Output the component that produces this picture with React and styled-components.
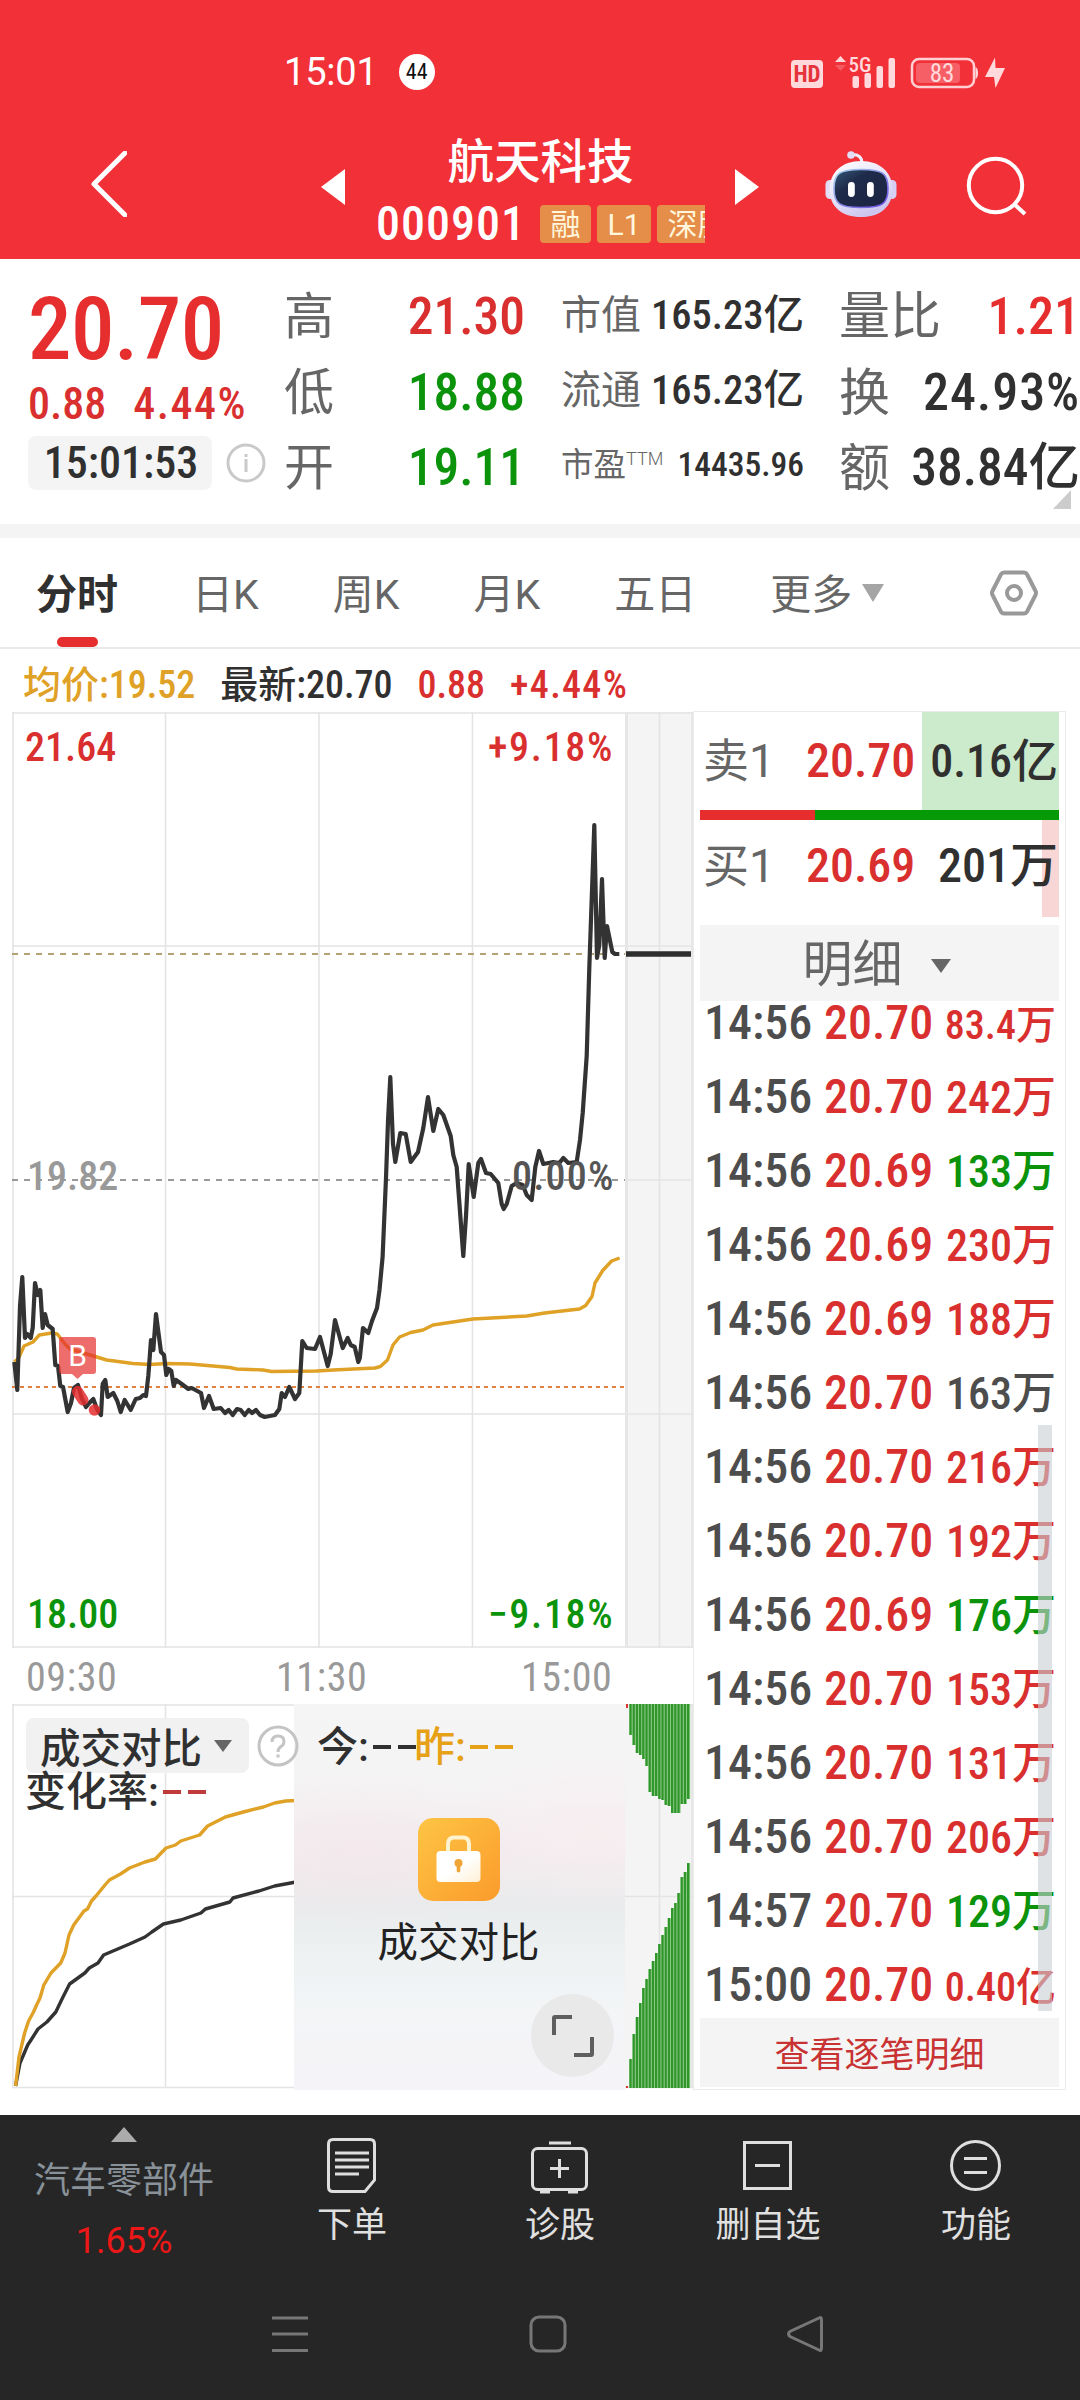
import React from "react";
import styled, { createGlobalStyle } from "styled-components";

const RED = "#d9302f";
const GREEN = "#0b930b";
const DARK = "#303030";
const GREY = "#666666";
const GOLD = "#dfa126";

const GlobalStyle = createGlobalStyle`
  * {
    box-sizing: border-box;
  }
  body {
    margin: 0;
    background: #ffffff;
    font-family: "Roboto Condensed", "Noto Sans CJK SC", sans-serif;
  }
  svg {
    display: block;
    flex: none;
  }
`;

const Page = styled.div`
  width: 1080px;
  height: 2400px;
  overflow: hidden;
  display: flex;
  flex-direction: column;
`;

/* ---------- header ---------- */

const TopArea = styled.header`
  height: 259px;
  background: #f23038;
  color: #ffffff;
`;

const StatusBar = styled.div`
  height: 120px;
  padding: 24px 74px 0 284px;
  display: flex;
  align-items: center;
`;

const Clock = styled.span`
  font-family: Roboto, sans-serif;
  font-size: 38px;
  letter-spacing: -0.2px;
`;

const CountBadge = styled.span`
  width: 36px;
  height: 36px;
  margin-left: 21px;
  border-radius: 50%;
  background: #ffffff;
  color: #111111;
  font-size: 22px;
  line-height: 36px;
  text-align: center;
`;

const StatusIcons = styled.div`
  margin-left: auto;
`;

const TitleBar = styled.div`
  height: 139px;
  display: grid;
  grid-template-columns: 321px 55px 329px 53px 67px 72px 68px 1fr;
`;

const TitleCell = styled.div`
  padding-top: ${({ $top }) => $top}px;
  padding-left: ${({ $left }) => $left || 0}px;
`;

const StockTitle = styled.div`
  padding-top: 12px;
  overflow: hidden;
`;

const StockName = styled.h1`
  margin: 0;
  font-size: 46.5px;
  line-height: 60px;
  font-weight: 500;
  text-align: center;
`;

const StockMeta = styled.div`
  margin-top: 12px;
  display: flex;
  align-items: center;
  gap: 6px;
`;

const StockCode = styled.span`
  width: 158px;
  flex: none;
  font-size: 48px;
  letter-spacing: 1px;
  line-height: 40px;
  font-weight: 500;
`;

const Tag = styled.span`
  height: 38px;
  min-width: 51px;
  flex: none;
  padding: 0 10.5px;
  border-radius: 4px;
  background: #e58e49;
  color: #fff6dc;
  font-family: Roboto, "Noto Sans CJK SC", sans-serif;
  font-size: 30px;
  line-height: 39px;
  text-align: center;
  white-space: nowrap;
`;

/* ---------- quote ---------- */

const Quote = styled.section`
  position: relative;
  height: 265px;
  padding: 19px 2px 0 28px;
  display: grid;
  grid-template-columns: 258px 239px 240px 237px;
`;

const PriceColumn = styled.div`
  padding-top: 6px;
  color: #e62e2e;
  font-weight: 500;
`;

const LastPrice = styled.div`
  font-size: 87px;
  line-height: 90px;
  letter-spacing: -0.5px;
`;

const ChangeRow = styled.div`
  display: flex;
  gap: 27px;
  font-size: 44px;
  line-height: 60px;
  color: ${RED};

  span + span {
    letter-spacing: 1.5px;
  }
`;

const TimeRow = styled.div`
  margin-top: 2px;
  display: flex;
  align-items: center;
  gap: 14px;
`;

const TimeChip = styled.span`
  width: 184px;
  height: 54px;
  padding-left: 2px;
  border-radius: 8px;
  background: #f4f4f4;
  color: ${DARK};
  font-size: 44px;
  line-height: 54px;
  text-align: center;
`;

const StatColumn = styled.div`
  margin-left: ${({ $ml }) => $ml || 0}px;
  margin-right: ${({ $mr }) => $mr || 0}px;
  display: grid;
  grid-template-rows: ${({ $rows }) => $rows};
`;

const Stat = styled.div`
  display: flex;
  justify-content: space-between;
  align-items: center;
  white-space: nowrap;
`;

const StatLabel = styled.span`
  color: ${GREY};
  font-size: ${({ $size }) => $size}px;
  line-height: 1;

  sup {
    font-family: Roboto, sans-serif;
    font-size: 18px;
    font-weight: 300;
    line-height: 0;
    vertical-align: 11px;
  }
`;

const StatValue = styled.span`
  color: ${({ $color }) => $color || DARK};
  font-size: ${({ $size }) => $size}px;
  letter-spacing: ${({ $ls }) => $ls || 0}px;
  line-height: 1;
  font-weight: 500;
`;

const Corner = styled.i`
  position: absolute;
  right: 9px;
  bottom: 15px;
  border-left: 18px solid transparent;
  border-bottom: 19px solid #cccccc;
`;

const Divider = styled.div`
  height: 14px;
  background: #f4f4f4;
`;

/* ---------- tabs ---------- */

const Tabs = styled.nav`
  height: 111px;
  padding: 0 42px 0 36px;
  border-bottom: 2px solid #e9e9e9;
  display: flex;
  align-items: center;
  gap: 74px;
  font-family: Roboto, "Noto Sans CJK SC", sans-serif;
`;

const Tab = styled.span`
  position: relative;
  height: 109px;
  color: ${({ $active }) => ($active ? DARK : GREY)};
  font-size: 41px;
  font-weight: ${({ $active }) => ($active ? 600 : 400)};
  line-height: 114px;

  &::after {
    content: "";
    display: ${({ $active }) => ($active ? "block" : "none")};
    position: absolute;
    left: 21px;
    bottom: 0;
    width: 41px;
    height: 10px;
    border-radius: 5px;
    background: #e62e2e;
  }
`;

const MoreTab = styled.span`
  display: flex;
  align-items: center;
  gap: 10px;
`;

const Down = styled.i`
  border-left: ${({ $w }) => $w / 2}px solid transparent;
  border-right: ${({ $w }) => $w / 2}px solid transparent;
  border-top: ${({ $h }) => $h}px solid ${({ $color }) => $color};
`;

const SettingsSlot = styled.span`
  margin-left: auto;
`;

const Legend = styled.div`
  height: 62px;
  padding: 4px 0 0 23px;
  display: flex;
  gap: 25px;
  font-size: 38px;
  line-height: 64px;
  font-weight: 500;
`;

const LegendItem = styled.span`
  color: ${({ $color }) => $color};
  letter-spacing: ${({ $ls }) => $ls || 0}px;
`;

/* ---------- body ---------- */

const Body = styled.main`
  height: 1404px;
  display: flex;
`;

const ChartColumn = styled.div`
  width: 693px;
`;

const SubChart = styled.div`
  position: relative;
  height: 386px;
`;

const Layer = styled.div`
  position: absolute;
  left: ${({ $x }) => $x}px;
  top: ${({ $y }) => $y}px;
  white-space: nowrap;
`;

const IndicatorChip = styled(Layer)`
  width: 223px;
  height: 55px;
  padding-left: 14px;
  border-radius: 8px;
  background: rgba(240, 240, 240, 0.9);
  display: flex;
  align-items: center;
  gap: 12px;
  color: ${DARK};
  font-size: 40.5px;
  font-weight: 500;
`;

const RateText = styled(Layer)`
  display: flex;
  align-items: center;
  color: ${({ $color }) => $color || DARK};
  font-size: 41px;
  line-height: 50px;
  font-weight: 500;
`;

const Dashes = styled.span`
  margin-left: 5px;
  display: inline-flex;
  gap: 7px;

  &::before,
  &::after {
    content: "";
    width: 18px;
    height: 4px;
    background: ${({ $color }) => $color};
  }
`;

const LockedPanel = styled(Layer)`
  width: 331px;
  height: 386px;
  padding: 114px 2px 0 0;
  background:
    radial-gradient(180px 80px at 20% 38%, rgba(246, 228, 233, 0.55), transparent),
    radial-gradient(160px 80px at 90% 34%, rgba(249, 236, 239, 0.7), transparent),
    linear-gradient(#f5f5f6 0%, #f4f3f4 25%, #f0edef 40%, #e9ebec 52%, #edf1f2 64%, #f3f5f7 80%, #f5f3f7 100%);
  display: flex;
  flex-direction: column;
  align-items: center;
`;

const LockedTitle = styled.div`
  margin-top: 16px;
  color: #222222;
  font-size: 40.5px;
  line-height: 52px;
`;

const ExpandButton = styled(Layer)`
  width: 83px;
  height: 83px;
  border-radius: 50%;
  background: #e9e9e9;
  display: grid;
  place-items: center;
`;

/* ---------- order book ---------- */

const OrderPanel = styled.aside`
  position: relative;
  width: 373px;
  height: 1379px;
  padding: 0 6px;
  border: 1px solid #ebebeb;
  background: #ffffff;
  font-weight: 500;
`;

const LevelRow = styled.div`
  height: ${({ $h }) => $h}px;
  padding: 0 1px 0 3px;
  display: grid;
  grid-template-columns: 103px 116px 1fr;
  font-size: 48px;
  line-height: ${({ $lh }) => $lh}px;
  color: ${RED};
  background: linear-gradient(${({ $fill }) => $fill}, ${({ $fill }) => $fill}) right top / ${({ $w }) => $w}px 100% no-repeat;

  span:first-child {
    color: ${GREY};
    font-family: Roboto, "Noto Sans CJK SC", sans-serif;
    font-size: 46px;
    font-weight: 400;
  }
  span:last-child {
    color: ${DARK};
    font-size: ${({ $size }) => $size}px;
    text-align: right;
    white-space: nowrap;
  }
`;

const RatioBar = styled.div`
  height: 10px;
  background: linear-gradient(90deg, #e62e2e 115px, #069a06 115px);
`;

const DetailHeader = styled.div`
  height: 76px;
  margin-top: 8px;
  padding: 5px 6px 0 0;
  background: #f4f4f4;
  display: flex;
  justify-content: center;
  align-items: center;
  gap: 28px;
  color: ${GREY};
  font-size: 50px;
  font-weight: 400;
  line-height: 71px;
`;

const TradeList = styled.div`
  display: flow-root;
  height: 1017px;
`;

const Trade = styled.div`
  height: 74px;
  margin-top: ${({ $first }) => ($first ? -15 : 0)}px;
  padding: 0 3px 0 4px;
  display: grid;
  grid-template-columns: 120px 106px 1fr;
  font-size: 48px;
  line-height: 74px;
  color: ${RED};

  span:first-child {
    color: #4d4d4d;
  }
`;

const Volume = styled.span`
  color: ${({ $color }) => $color};
  font-size: ${({ $small }) => ($small ? 40 : 44)}px;
  line-height: ${({ $small }) => ($small ? 79 : 77)}px;
  text-align: right;
  white-space: nowrap;
`;

const ScrollThumb = styled.i`
  position: absolute;
  right: 13px;
  top: 713px;
  width: 14px;
  height: 586px;
  background: rgba(200, 206, 212, 0.6);
`;

const AllTrades = styled.div`
  height: 69px;
  background: #f4f4f4;
  color: #c83232;
  font-size: 35px;
  font-weight: 400;
  line-height: 75px;
  text-align: center;
`;

/* ---------- bottom ---------- */

const ActionBar = styled.footer`
  height: 155px;
  background: #262626;
  display: grid;
  grid-template-columns: 248px repeat(4, 208px);
`;

const Sector = styled.div`
  padding-top: 12px;
  display: flex;
  flex-direction: column;
  align-items: center;
  color: #899299;
  font-size: 36px;
  line-height: 59px;
  white-space: nowrap;

  b {
    color: #ee1717;
    font-family: Roboto, sans-serif;
    font-weight: 400;
    line-height: 60px;
  }
`;

const Up = styled.i`
  margin-bottom: 10px;
  border-left: 13px solid transparent;
  border-right: 13px solid transparent;
  border-bottom: 15px solid #ababab;
`;

const Action = styled.div`
  padding-top: 20px;
  display: flex;
  flex-direction: column;
  align-items: center;
  gap: 6px;
  color: #e0e0e0;
  font-size: 35px;
  line-height: 50px;
`;

const SystemNav = styled.div`
  height: 130px;
  padding: 45px 256px 0 271px;
  background: #262626;
  display: flex;
  justify-content: space-between;
`;

/* ---------- data ---------- */

const PRICE_LINE =
  "14.3,1362 17.3,1390 20,1306 22.3,1277 25,1338 27.3,1334 30.7,1338 32.7,1328 35,1283 37.7,1295 40.3,1290 42.7,1328 45,1314 47.7,1325 52.7,1329 55.3,1365 58,1366 60.3,1386 63,1387 67.7,1412 71,1403 74,1388 78,1385 81.7,1398 86,1407 89.3,1403 93.3,1399 97.3,1410 101,1415 102.7,1384 105.3,1380 107.7,1397 113.3,1393 117.3,1401 120.7,1412 124.7,1400 130.7,1410 135.7,1399 140,1398 143.3,1395 146,1396 148.3,1376 151,1340 153.3,1350 156,1314 161,1352 164,1355 166.3,1375 168.7,1369 171.3,1371 173.7,1386 176,1380 181.7,1384 188.3,1389 191.7,1388 201,1393 204,1408 209,1396 213.7,1409 220.7,1408 225,1413 228.7,1410 232.7,1415 237,1409 240.7,1410 244.7,1415 248.7,1410 252,1413 256,1410 260,1415 264.7,1417 275,1415 279.3,1409 281.7,1393 285,1397 289.3,1387 295,1399 299.3,1393 302.3,1341 306.7,1348 315,1349 320,1337 327.7,1366 330.7,1354 335,1320 342.7,1348 347.7,1338 350.7,1345 354.7,1347 358.3,1362 359.8,1358 363,1328 368.3,1333 372,1321 377,1308 379.5,1290 382.6,1257 386,1178 388,1121 390.3,1077 393,1144 395.3,1162 400.3,1133 405.7,1134 410.7,1162 418,1152 423.3,1128 428,1097 433.3,1131 438.3,1109 443.3,1115 450.7,1136 453.3,1155 456.7,1167 463.3,1256 466,1216 468.7,1164 473.7,1197 478.3,1163 481,1159 486,1173 490.7,1174 498.3,1183 501.7,1204 503.7,1209 506.7,1204 511.7,1186 516.7,1183 522.7,1185 526.7,1195 531.7,1200 535.3,1167 539,1151 543.3,1164 553.3,1162 559.3,1163 563.3,1158 568.3,1163 576.7,1162 580,1140 582.7,1113 586.7,1056 589.3,968 594.3,825 597,958 599.3,945 602,879 604.7,958 607,926 612.3,952 615,954 619.3,954";

const AVERAGE_LINE =
  "14.3,1362 18.7,1358 24,1346 33,1342 39.3,1335 51.7,1333 57.3,1334 65,1344 70,1349 96.7,1357 106.7,1360 133,1363.5 150,1364.5 166.7,1363.5 190,1364 213,1366 230,1367.5 236.7,1369 263,1370 271.7,1371.5 316.7,1371 333,1370 375,1368 380.4,1366.5 387.5,1360 393,1345 399.6,1337 410.7,1332.5 423,1330 433,1325 473,1319 526.8,1316 544.6,1313 579.5,1309 585.7,1305.5 592,1296.5 595,1283 602.7,1270.5 611.6,1261 619.6,1258";

const YESTERDAY_LINE =
  "15.6,2086 19,2057 24.6,2033 28.6,2021 33.5,2012 36.6,2005 40,1998 43.8,1985 51,1973 60.7,1963 65,1953 69,1935 73.7,1925 84,1911 87.5,1909 91.5,1901 96,1896 105,1885 109.4,1880 120.5,1874 129.5,1868 145,1862 155.4,1859 166,1848 175.4,1845 180.8,1841 199.6,1835 207.6,1826 225.4,1817 243.3,1812 263.4,1807 274.6,1803 285.7,1801 296,1800.5";

const TODAY_LINE =
  "15.6,2086 20,2063 27.7,2045 31,2040 38,2029 46.9,2022 55.8,2012 62.5,1998 69.6,1984 84.8,1973 89.3,1968 98,1963 103.6,1955 129.5,1944 145,1937 151.8,1932 163.4,1924 180.8,1920 200.9,1913 205.4,1909 229.9,1902 233,1898 259,1891 274.6,1886 296,1882";

const UPPER_BARS = [1735, 1745, 1753, 1755, 1759, 1766, 1792, 1796, 1796, 1799, 1800, 1805, 1806, 1813, 1813, 1813, 1804, 1804, 1799];
const LOWER_BARS = [2059, 2034, 2017, 2003, 1988, 1979, 1969, 1961, 1953, 1944, 1935, 1927, 1918, 1908, 1903, 1893, 1877, 1872, 1863];

const TRADES = [
  ["14:56", "20.70", "83.4万", RED],
  ["14:56", "20.70", "242万", RED],
  ["14:56", "20.69", "133万", GREEN],
  ["14:56", "20.69", "230万", RED],
  ["14:56", "20.69", "188万", RED],
  ["14:56", "20.70", "163万", "#4d4d4d"],
  ["14:56", "20.70", "216万", RED],
  ["14:56", "20.70", "192万", RED],
  ["14:56", "20.69", "176万", GREEN],
  ["14:56", "20.70", "153万", RED],
  ["14:56", "20.70", "131万", RED],
  ["14:56", "20.70", "206万", RED],
  ["14:57", "20.70", "129万", GREEN],
  ["15:00", "20.70", "0.40亿", RED],
];

/* ---------- icons ---------- */

const DeviceStatus = () => (
  <svg width="216" height="38" viewBox="790 52 216 38" fill="#ffd9db">
    <rect x="791" y="59" width="32" height="28" rx="4" />
    <text x="807" y="81" fontSize="23" fontWeight="700" textAnchor="middle" fill="#e6343c">
      HD
    </text>
    <path d="M835 61 l5.5 -6 l5.5 6z" />
    <path d="M835 64 l5.5 6 l5.5 -6z" opacity="0.25" />
    <text x="848.5" y="70.5" fontSize="21" fontWeight="500">
      5G
    </text>
    <rect x="852.5" y="75" width="6.5" height="12" rx="2" />
    <rect x="864.5" y="72" width="6.5" height="15" rx="2" />
    <rect x="876.5" y="65" width="6.5" height="22" rx="2" />
    <rect x="888.5" y="57" width="6.5" height="30" rx="2" />
    <rect x="912" y="58" width="62" height="28" rx="7" fill="none" stroke="#ffd0d3" strokeWidth="2.5" />
    <rect x="916" y="62" width="44" height="20" rx="4" fill="#f75f66" />
    <path d="M975.5 66 q2.5 1 2.5 6 q0 5 -2.5 6z" />
    <text x="942" y="81" fontSize="25" textAnchor="middle">
      83
    </text>
    <path d="M995 56.5 L985 76 H994 L995.5 87 L1005 67 H995.5z" />
  </svg>
);

const BackIcon = () => (
  <svg width="36" height="66" viewBox="91 151 36 66" fill="none" stroke="#fff" strokeWidth="5">
    <path d="M125 153 L94 184 L125 215" strokeLinecap="round" strokeLinejoin="round" />
  </svg>
);

const Triangle = ({ right }) => (
  <svg width="24" height="36" viewBox="0 0 24 36" fill="#fff">
    <path d={right ? "M0 0 L24 18 L0 36z" : "M24 0 L0 18 L24 36z"} />
  </svg>
);

const RobotIcon = () => (
  <svg width="72" height="68" viewBox="825 150 72 68">
    <defs>
      <linearGradient id="robotHead" x1="0" y1="0" x2="0.5" y2="1">
        <stop offset="0" stopColor="#ffffff" />
        <stop offset="0.65" stopColor="#e3dff8" />
        <stop offset="1" stopColor="#cdc6ee" />
      </linearGradient>
      <linearGradient id="robotFace" x1="0" y1="0" x2="1" y2="1">
        <stop offset="0" stopColor="#35587a" />
        <stop offset="0.35" stopColor="#1f2b4a" />
        <stop offset="1" stopColor="#1b2442" />
      </linearGradient>
      <linearGradient id="robotRim" x1="0" y1="0" x2="1" y2="1">
        <stop offset="0" stopColor="#a9d7e8" />
        <stop offset="1" stopColor="#6a48e6" />
      </linearGradient>
    </defs>
    <path d="M862 163 q0 -8 -9 -8.5" fill="none" stroke="#f0eefc" strokeWidth="3" />
    <circle cx="851" cy="155" r="3.8" fill="#e2dcf6" />
    <rect x="825.5" y="180" width="9" height="19" rx="4.5" fill="#e3def7" />
    <rect x="887.5" y="180" width="9" height="19" rx="4.5" fill="#d6cff3" />
    <path d="M861 161 C880 161 892 172 892.5 189 C892.5 207 880 217 861 217 C842 217 829.5 207 829.5 189 C830 172 842 161 861 161z" fill="url(#robotHead)" />
    <path d="M861 169.5 C882 169.5 888 173 888 188.5 C888 204 882 207.5 861 207.5 C840 207.5 834 204 834 188.5 C834 173 840 169.5 861 169.5z" fill="url(#robotFace)" stroke="url(#robotRim)" strokeWidth="1.6" />
    <rect x="848" y="182" width="6.8" height="15" rx="3.4" fill="#fff" />
    <rect x="867" y="182" width="6.8" height="15" rx="3.4" fill="#fff" />
  </svg>
);

const SearchIcon = () => (
  <svg width="64" height="64" viewBox="964 155 64 64" fill="none" stroke="#fff" strokeWidth="4">
    <circle cx="994.5" cy="185.5" r="26.7" />
    <path d="M1013 204 L1024 214" />
  </svg>
);

const InfoIcon = () => (
  <svg width="40" height="40" viewBox="0 0 40 40" fill="none" stroke="#c9c9c9" strokeWidth="3">
    <circle cx="20" cy="20" r="18" />
    <path d="M20 16 V29 M20 11 V14" />
  </svg>
);

const HexIcon = () => (
  <svg width="48" height="46" viewBox="0 0 48 46" fill="none" stroke="#999" strokeWidth="4">
    <path d="M14 2.5 H34 Q36 2.5 37 4.3 L45.5 21 Q46.5 23 45.5 25 L37 41.7 Q36 43.5 34 43.5 H14 Q12 43.5 11 41.7 L2.5 25 Q1.5 23 2.5 21 L11 4.3 Q12 2.5 14 2.5z" />
    <circle cx="24" cy="23" r="7" />
  </svg>
);

const HelpIcon = () => (
  <svg width="42" height="42" viewBox="0 0 42 42" fill="none" stroke="#c4c4c4" strokeWidth="3">
    <circle cx="21" cy="21" r="19" />
    <path d="M15 17 Q15 11 21 11 Q27 11 27 16.5 Q27 19.5 24 21.5 Q21 23.5 21 27 M21 29.5 V32.5" />
  </svg>
);

const LockIcon = () => (
  <svg width="82" height="83" viewBox="0 0 82 83">
    <defs>
      <linearGradient id="lockBg" x1="0" y1="0" x2="1" y2="1">
        <stop offset="0" stopColor="#fdc544" />
        <stop offset="1" stopColor="#fb9b2c" />
      </linearGradient>
      <linearGradient id="lockBody" x1="0" y1="0" x2="1" y2="1">
        <stop offset="0.5" stopColor="#ffffff" />
        <stop offset="1" stopColor="#fff0d4" />
      </linearGradient>
    </defs>
    <rect width="82" height="83" rx="15" fill="url(#lockBg)" />
    <path d="M30 36 V26 Q30 19.5 36 19.5 H45 Q51 19.5 51 26 V36" fill="none" stroke="#fff3cf" strokeWidth="4" />
    <rect x="18.5" y="33" width="44" height="31" rx="4" fill="url(#lockBody)" />
    <circle cx="40.5" cy="45" r="4" fill="#f0a637" />
    <rect x="38.7" y="46" width="3.6" height="8.5" rx="1.8" fill="#f0a637" />
  </svg>
);

const ExpandIcon = () => (
  <svg width="44" height="44" viewBox="0 0 44 44" fill="none" stroke="#5e5e5e" strokeWidth="4">
    <path d="M3 21 V4 Q3 3 4 3 H21 M23 41 H40 Q41 41 41 40 V23" />
  </svg>
);

const actionStroke = { fill: "none", stroke: "#dedede", strokeWidth: 3 };

const OrderIcon = () => (
  <svg width="60" height="60" viewBox="0 0 60 60" {...actionStroke}>
    <path d="M11 4.5 H48 Q52.5 4.5 52.5 9 V45 L43 56.5 H11 Q6.5 56.5 6.5 52 V9 Q6.5 4.5 11 4.5z" />
    <path d="M13 18 H47 M13 25 H47 M13 32 H47 M13 39 H37" />
  </svg>
);

const DiagnoseIcon = () => (
  <svg width="60" height="60" viewBox="0 0 60 60" {...actionStroke}>
    <rect x="2.5" y="13.5" width="54" height="41" rx="5" />
    <path d="M19 8 H41 M29.5 24 V43 M20 33.5 H39" />
    <path d="M10 57 H20 M38 57 H48" />
  </svg>
);

const RemoveIcon = () => (
  <svg width="60" height="60" viewBox="0 0 60 60" {...actionStroke}>
    <rect x="6.5" y="7.5" width="46" height="46" />
    <path d="M17 30.5 H42" />
  </svg>
);

const FunctionIcon = () => (
  <svg width="60" height="60" viewBox="0 0 60 60" {...actionStroke}>
    <circle cx="29.5" cy="30.5" r="24" />
    <path d="M18 23.5 H41 M18 37.5 H41" />
  </svg>
);

/* ---------- charts ---------- */

const grid = { stroke: "#e4e4e4", strokeWidth: 1.6 };

const PriceChart = () => (
  <svg width="693" height="993" viewBox="0 711 693 993" fill="none">
    <rect x="625" y="712" width="68" height="936" fill="#f4f4f4" />
    <path d="M12 713 H693 M12 946 H693 M625 1180 H693 M12 1414 H693 M12 1647 H693" {...grid} />
    <path d="M13 712 V1648 M165.5 712 V1648 M319 712 V1648 M472.5 712 V1648 M659.5 712 V1648 M692 712 V1648" {...grid} />
    <path d="M626.5 712 V1648" stroke="#e6e6e6" strokeWidth="3" />
    <path d="M12 954 H625" stroke="#b3a273" strokeWidth="2" strokeDasharray="6 6" />
    <path d="M12 1180 H625" stroke="#999" strokeWidth="2" strokeDasharray="6 6" />
    <path d="M12 1387 H625" stroke="#e07f3e" strokeWidth="2" strokeDasharray="4 4" />
    <polyline points={AVERAGE_LINE} stroke={GOLD} strokeWidth="3.4" strokeLinejoin="round" />
    <polyline points={PRICE_LINE} stroke="#333" strokeWidth="4.2" strokeLinejoin="round" />
    <path d="M626 954 H691" stroke="#2e2e2e" strokeWidth="5.5" />
    <g fill="#e62e2e">
      <path d="M77.5 1391.5 L83 1400" stroke="#e62e2e" strokeWidth="11" strokeLinecap="round" opacity="0.85" />
      <circle cx="94.5" cy="1410" r="5.8" opacity="0.85" />
      <path d="M62 1337 H93 Q96 1337 96 1340 V1371 Q96 1374 93 1374 H83 L77.5 1379 L72 1374 H62 Q59 1374 59 1371 V1340 Q59 1337 62 1337z" opacity="0.7" />
    </g>
    <text x="77.5" y="1366" fontSize="30" textAnchor="middle" fill="#fff" fontFamily="Roboto">
      B
    </text>
    <g fontSize="40" fontWeight="500">
      <text x="25" y="761" fill={RED}>21.64</text>
      <text x="488" y="761" fill={RED} letterSpacing="1.7">+9.18%</text>
      <text x="27" y="1190" fill="#999">19.82</text>
      <text x="512" y="1190" fill="#555" letterSpacing="1.2">0.00%</text>
      <text x="27" y="1628" fill={GREEN}>18.00</text>
      <text x="488" y="1628" fill={GREEN} letterSpacing="1.7">−9.18%</text>
    </g>
    <g fontSize="40" fill="#999" letterSpacing="0.6">
      <text x="26" y="1691">09:30</text>
      <text x="276" y="1691">11:30</text>
      <text x="521" y="1691">15:00</text>
    </g>
  </svg>
);

const CompareChart = () => (
  <svg width="693" height="386" viewBox="0 1704 693 386" fill="none">
    <rect x="625" y="1704" width="68" height="384" fill="#f4f4f4" />
    <path d="M12 1705 H693 M12 1896.5 H693 M12 2087.5 H693 M13 1704 V2088 M165.5 1704 V2088 M659.5 1704 V2088 M692 1704 V2088" {...grid} />
    <polyline points={TODAY_LINE} stroke="#333" strokeWidth="3.4" strokeLinejoin="round" />
    <polyline points={YESTERDAY_LINE} stroke={GOLD} strokeWidth="3.4" strokeLinejoin="round" />
    {UPPER_BARS.map((y, i) => (
      <g key={i}>
        <rect x={629.4 + i * 3.2} y="1704" width="3.2" height={y - 1704} fill="#8ac683" />
        <rect x={629.4 + i * 3.2} y="1704" width="2.2" height={y - 1704} fill="#2f962a" />
        <rect x={629.4 + i * 3.2} y={LOWER_BARS[i]} width="3.2" height={2088 - LOWER_BARS[i]} fill="#8ac683" />
        <rect x={629.4 + i * 3.2} y={LOWER_BARS[i]} width="2.2" height={2088 - LOWER_BARS[i]} fill="#2f962a" />
      </g>
    ))}
    <path d="M627 1704 V1708 M627 2086 V2088" stroke="#d33" strokeWidth="2" />
  </svg>
);

const App = () => {
  return (
    <Page>
      <GlobalStyle />
      <TopArea>
        <StatusBar>
          <Clock>15:01</Clock>
          <CountBadge>44</CountBadge>
          <StatusIcons>
            <DeviceStatus />
          </StatusIcons>
        </StatusBar>
        <TitleBar>
          <TitleCell $top={31} $left={91}>
            <BackIcon />
          </TitleCell>
          <TitleCell $top={49}>
            <Triangle />
          </TitleCell>
          <StockTitle>
            <StockName>航天科技</StockName>
            <StockMeta>
              <StockCode>000901</StockCode>
              <Tag>融</Tag>
              <Tag>L1</Tag>
              <Tag>深股通</Tag>
            </StockMeta>
          </StockTitle>
          <TitleCell $top={49} $left={30}>
            <Triangle right />
          </TitleCell>
          <span />
          <TitleCell $top={30}>
            <RobotIcon />
          </TitleCell>
          <span />
          <TitleCell $top={35}>
            <SearchIcon />
          </TitleCell>
        </TitleBar>
      </TopArea>

      <Quote>
        <PriceColumn>
          <LastPrice>20.70</LastPrice>
          <ChangeRow>
            <span>0.88</span>
            <span>4.44%</span>
          </ChangeRow>
          <TimeRow>
            <TimeChip>15:01:53</TimeChip>
            <InfoIcon />
          </TimeRow>
        </PriceColumn>
        <StatColumn $rows="77px 76px 74px" $ml={-2}>
          <Stat>
            <StatLabel $size={50}>高</StatLabel>
            <StatValue $size={51.5} $color={RED}>21.30</StatValue>
          </Stat>
          <Stat>
            <StatLabel $size={50}>低</StatLabel>
            <StatValue $size={51.5} $color={GREEN}>18.88</StatValue>
          </Stat>
          <Stat>
            <StatLabel $size={50}>开</StatLabel>
            <StatValue $size={51.5} $color={GREEN}>19.11</StatValue>
          </Stat>
        </StatColumn>
        <StatColumn $rows="75px 75px 74px" $ml={36} $mr={-39}>
          <Stat>
            <StatLabel $size={40}>市值</StatLabel>
            <StatValue $size={40.5}>165.23亿</StatValue>
          </Stat>
          <Stat>
            <StatLabel $size={40}>流通</StatLabel>
            <StatValue $size={40.5}>165.23亿</StatValue>
          </Stat>
          <Stat>
            <StatLabel $size={32.5}>
              市盈<sup>TTM</sup>
            </StatLabel>
            <StatValue $size={33.5}>14435.96</StatValue>
          </Stat>
        </StatColumn>
        <StatColumn $rows="77px 76px 74px" $ml={74} $mr={-78}>
          <Stat>
            <StatLabel $size={51}>量比</StatLabel>
            <StatValue $size={52} $color="#e62e2e">1.21</StatValue>
          </Stat>
          <Stat>
            <StatLabel $size={51}>换</StatLabel>
            <StatValue $size={52} $ls={0.9}>24.93%</StatValue>
          </Stat>
          <Stat>
            <StatLabel $size={51}>额</StatLabel>
            <StatValue $size={51.5}>38.84亿</StatValue>
          </Stat>
        </StatColumn>
        <Corner />
      </Quote>
      <Divider />

      <Tabs>
        <Tab $active>分时</Tab>
        <Tab>日K</Tab>
        <Tab>周K</Tab>
        <Tab>月K</Tab>
        <Tab>五日</Tab>
        <MoreTab>
          <Tab>更多</Tab>
          <Down $w={22} $h={18} $color="#a5a5a5" />
        </MoreTab>
        <SettingsSlot>
          <HexIcon />
        </SettingsSlot>
      </Tabs>
      <Legend>
        <LegendItem $color={GOLD}>均价:19.52</LegendItem>
        <LegendItem $color={DARK}>最新:20.70</LegendItem>
        <LegendItem $color={RED}>0.88</LegendItem>
        <LegendItem $color={RED} $ls={1.3}>+4.44%</LegendItem>
      </Legend>

      <Body>
        <ChartColumn>
          <PriceChart />
          <SubChart>
            <CompareChart />
            <IndicatorChip $x={26} $y={14}>
              成交对比
              <Down $w={18} $h={12} $color="#666" />
            </IndicatorChip>
            <RateText $x={25} $y={63}>
              变化率:
              <Dashes $color="#c03a3a" />
            </RateText>
            <LockedPanel $x={294} $y={0}>
              <LockIcon />
              <LockedTitle>成交对比</LockedTitle>
            </LockedPanel>
            <Layer $x={256.5} $y={20.5}>
              <HelpIcon />
            </Layer>
            <RateText $x={317} $y={18}>
              今:
              <Dashes $color={DARK} />
            </RateText>
            <RateText $x={414} $y={18} $color="#e6a117">
              昨:
              <Dashes $color="#e6a117" />
            </RateText>
            <ExpandButton $x={531} $y={290}>
              <ExpandIcon />
            </ExpandButton>
          </SubChart>
        </ChartColumn>

        <OrderPanel>
          <LevelRow $h={98} $lh={98} $fill="#cceacc" $w={137} $size={46}>
            <span>卖1</span>
            <span>20.70</span>
            <span>0.16亿</span>
          </LevelRow>
          <RatioBar />
          <LevelRow $h={97} $lh={92} $fill="#f9d6d6" $w={17} $size={48}>
            <span>买1</span>
            <span>20.69</span>
            <span>201万</span>
          </LevelRow>
          <DetailHeader>
            明细
            <Down $w={20} $h={14} $color="#666" />
          </DetailHeader>
          <TradeList>
            {TRADES.map(([time, price, volume, color], i) => (
              <Trade key={i} $first={i === 0}>
                <span>{time}</span>
                <span>{price}</span>
                <Volume $color={color} $small={volume.includes(".")}>
                  {volume}
                </Volume>
              </Trade>
            ))}
          </TradeList>
          <AllTrades>查看逐笔明细</AllTrades>
          <ScrollThumb />
        </OrderPanel>
      </Body>

      <ActionBar>
        <Sector>
          <Up />
          汽车零部件
          <b>1.65%</b>
        </Sector>
        <Action>
          <OrderIcon />
          下单
        </Action>
        <Action>
          <DiagnoseIcon />
          诊股
        </Action>
        <Action>
          <RemoveIcon />
          删自选
        </Action>
        <Action>
          <FunctionIcon />
          功能
        </Action>
      </ActionBar>
      <SystemNav>
        <svg width="38" height="38" viewBox="0 0 38 38" fill="none" stroke="#777" strokeWidth="3">
          <path d="M1 3 H37 M1 19 H37 M1 35.5 H37" />
        </svg>
        <svg width="38" height="38" viewBox="0 0 38 38" fill="none" stroke="#777" strokeWidth="3">
          <rect x="2" y="2" width="34" height="34" rx="8" />
        </svg>
        <svg width="38" height="38" viewBox="0 0 38 38" fill="none" stroke="#777" strokeWidth="3">
          <path d="M33 3 Q35.5 1.5 35.5 5 V33 Q35.5 36.5 33 35 L4 21.5 Q1 19 4 16.5z" />
        </svg>
      </SystemNav>
    </Page>
  );
};

export default App;
